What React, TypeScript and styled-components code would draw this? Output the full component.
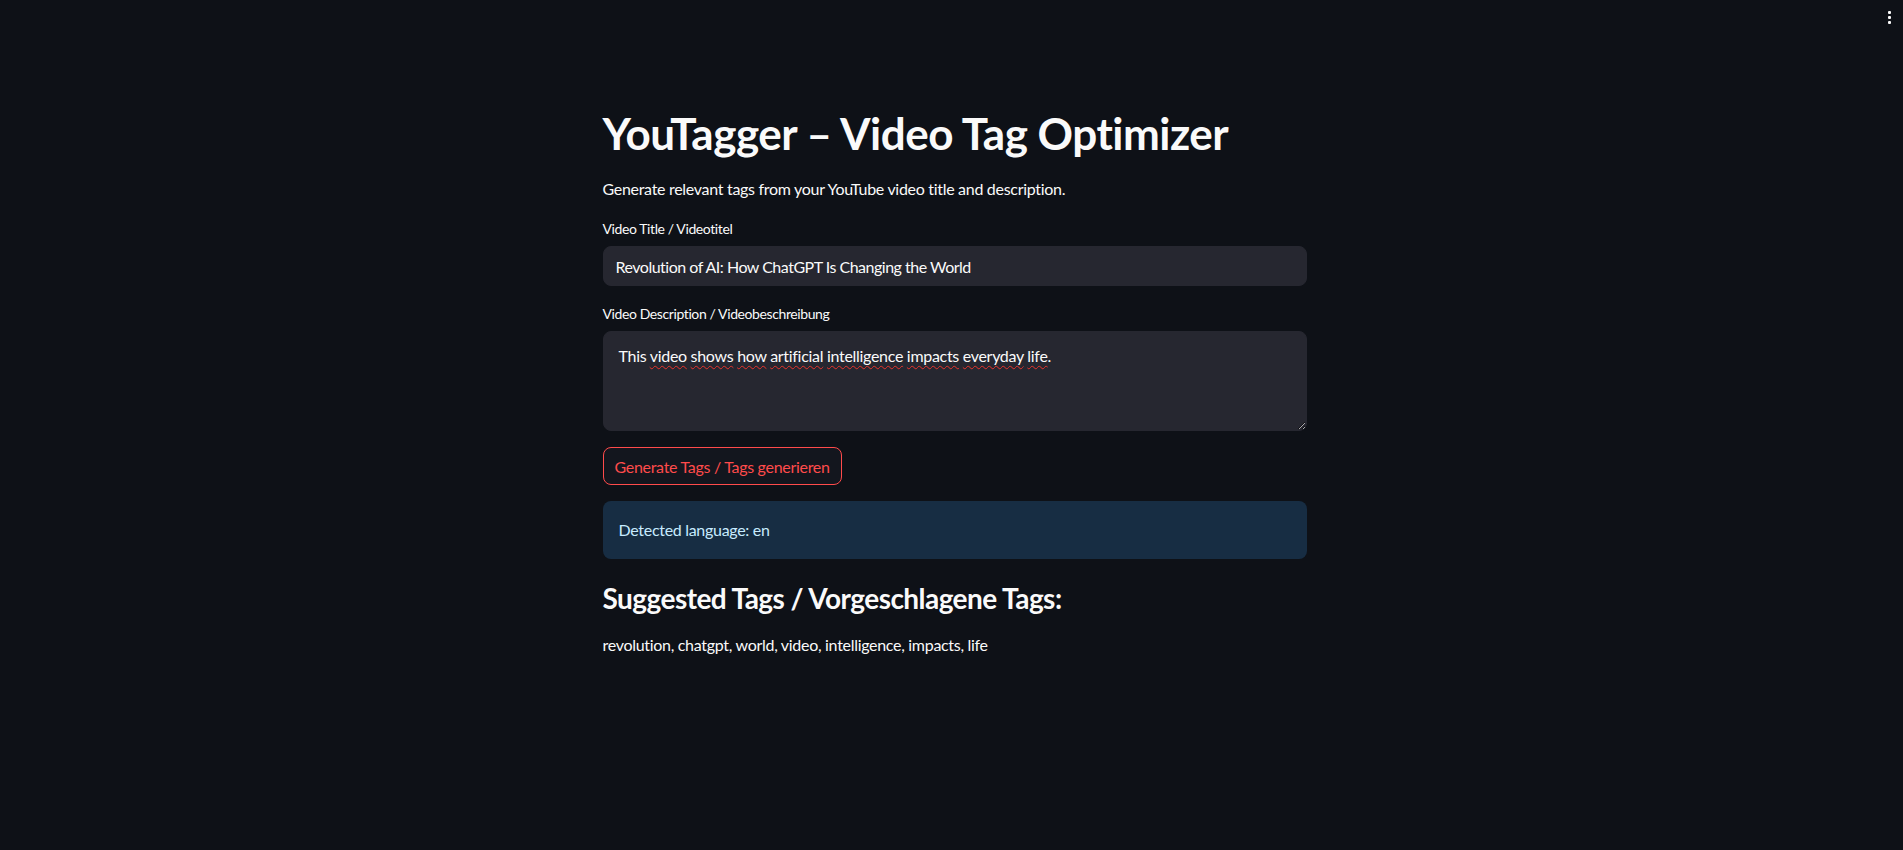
import React from "react";
import styled, { createGlobalStyle } from "styled-components";

const Global = createGlobalStyle`
  html, body { margin: 0; padding: 0; background: #0e1117; }
  body { font-family: Lato, "Open Sans", sans-serif; color: #fafafa; overflow: hidden; }
  * { box-sizing: border-box; }
`;

const Page = styled.div`
  height: 100vh;
  background: #0e1117;
  position: relative;
`;

const MenuButton = styled.button`
  position: absolute;
  top: 6px;
  right: 4px;
  width: 20px;
  height: 22px;
  background: transparent;
  border: none;
  padding: 0;
  display: flex;
  flex-direction: column;
  align-items: center;
  justify-content: center;
  gap: 2px;
  cursor: pointer;
`;

const Dot = styled.span`
  width: 3px;
  height: 3px;
  border-radius: 1px;
  background: #fafafa;
`;

const Main = styled.main`
  max-width: 736px;
  margin: 0 auto;
  padding: 107px 13px 0 19px;
  display: flex;
  flex-direction: column;
  gap: 16px;
  letter-spacing: -0.3px;
`;

const Title = styled.h1`
  margin: 0;
  font-size: 44px;
  line-height: 1.2;
  font-weight: 700;
  letter-spacing: -0.5px;
`;

const Para = styled.p`
  margin: 0;
  font-size: 16px;
  line-height: 25.6px;
`;

const Field = styled.div`
  display: flex;
  flex-direction: column;
  gap: 5px;
`;

const Label = styled.label`
  font-size: 14px;
  line-height: 24px;
  height: 24px;
  letter-spacing: -0.4px;
`;

const Input = styled.input`
  height: 40px;
  width: 100%;
  background: #262730;
  border: 1px solid #262730;
  border-radius: 8px;
  color: #fafafa;
  font: inherit;
  font-size: 16px;
  letter-spacing: -0.5px;
  padding: 0 12px;
  outline: none;
`;

const AreaWrap = styled.div`
  position: relative;
  height: 100px;
`;

const TextArea = styled.textarea`
  display: block;
  width: 100%;
  height: 100px;
  background: #262730;
  border: 1px solid #262730;
  border-radius: 8px;
  color: #fafafa;
  font: inherit;
  font-size: 16px;
  letter-spacing: -0.3px;
  line-height: 25.6px;
  padding: 11px 15px;
  outline: none;
  resize: vertical;
`;

const SpellLayer = styled.div`
  position: absolute;
  inset: 0;
  padding: 12px 16px;
  font-size: 16px;
  line-height: 25.6px;
  letter-spacing: -0.3px;
  color: transparent;
  pointer-events: none;
  white-space: pre-wrap;
`;

const Miss = styled.span`
  text-decoration: underline wavy #e8342c;
  text-decoration-thickness: 1.2px;
  text-underline-offset: 3px;
`;

const Button = styled.button`
  align-self: flex-start;
  height: 38px;
  padding: 0 11px;
  background: #13161e;
  border: 1px solid #ff4b4b;
  border-radius: 8px;
  color: #ff4b4b;
  font: inherit;
  font-size: 16px;
  letter-spacing: -0.3px;
  cursor: pointer;
`;

const Info = styled.div`
  background: #172d43;
  color: #c7ebff;
  border-radius: 8px;
  padding: 16px;
  font-size: 16px;
  line-height: 25.6px;
`;

const SubHead = styled.h3`
  margin: 7px 0 0;
  font-size: 28px;
  line-height: 1.2;
  font-weight: 700;
  letter-spacing: -0.55px;
`;

const words = ["video", "shows", "how", "artificial", "intelligence", "impacts", "everyday", "life"];

export default function App() {
  return (
    <Page>
      <Global />
      <MenuButton aria-label="Main menu">
        <Dot />
        <Dot />
        <Dot />
      </MenuButton>
      <Main>
        <Title>YouTagger – Video Tag Optimizer</Title>
        <Para>Generate relevant tags from your YouTube video title and description.</Para>
        <Field>
          <Label>Video Title / Videotitel</Label>
          <Input defaultValue="Revolution of AI: How ChatGPT Is Changing the World" />
        </Field>
        <Field>
          <Label>Video Description / Videobeschreibung</Label>
          <AreaWrap>
            <TextArea spellCheck={false} defaultValue="This video shows how artificial intelligence impacts everyday life." />
            <SpellLayer aria-hidden="true">
              This{" "}
              {words.map((w, i) => (
                <React.Fragment key={w}>
                  <Miss>{w}</Miss>
                  {i < words.length - 1 ? " " : "."}
                </React.Fragment>
              ))}
            </SpellLayer>
          </AreaWrap>
        </Field>
        <Button>Generate Tags / Tags generieren</Button>
        <Info>Detected language: en</Info>
        <SubHead>Suggested Tags / Vorgeschlagene Tags:</SubHead>
        <Para>revolution, chatgpt, world, video, intelligence, impacts, life</Para>
      </Main>
    </Page>
  );
}
